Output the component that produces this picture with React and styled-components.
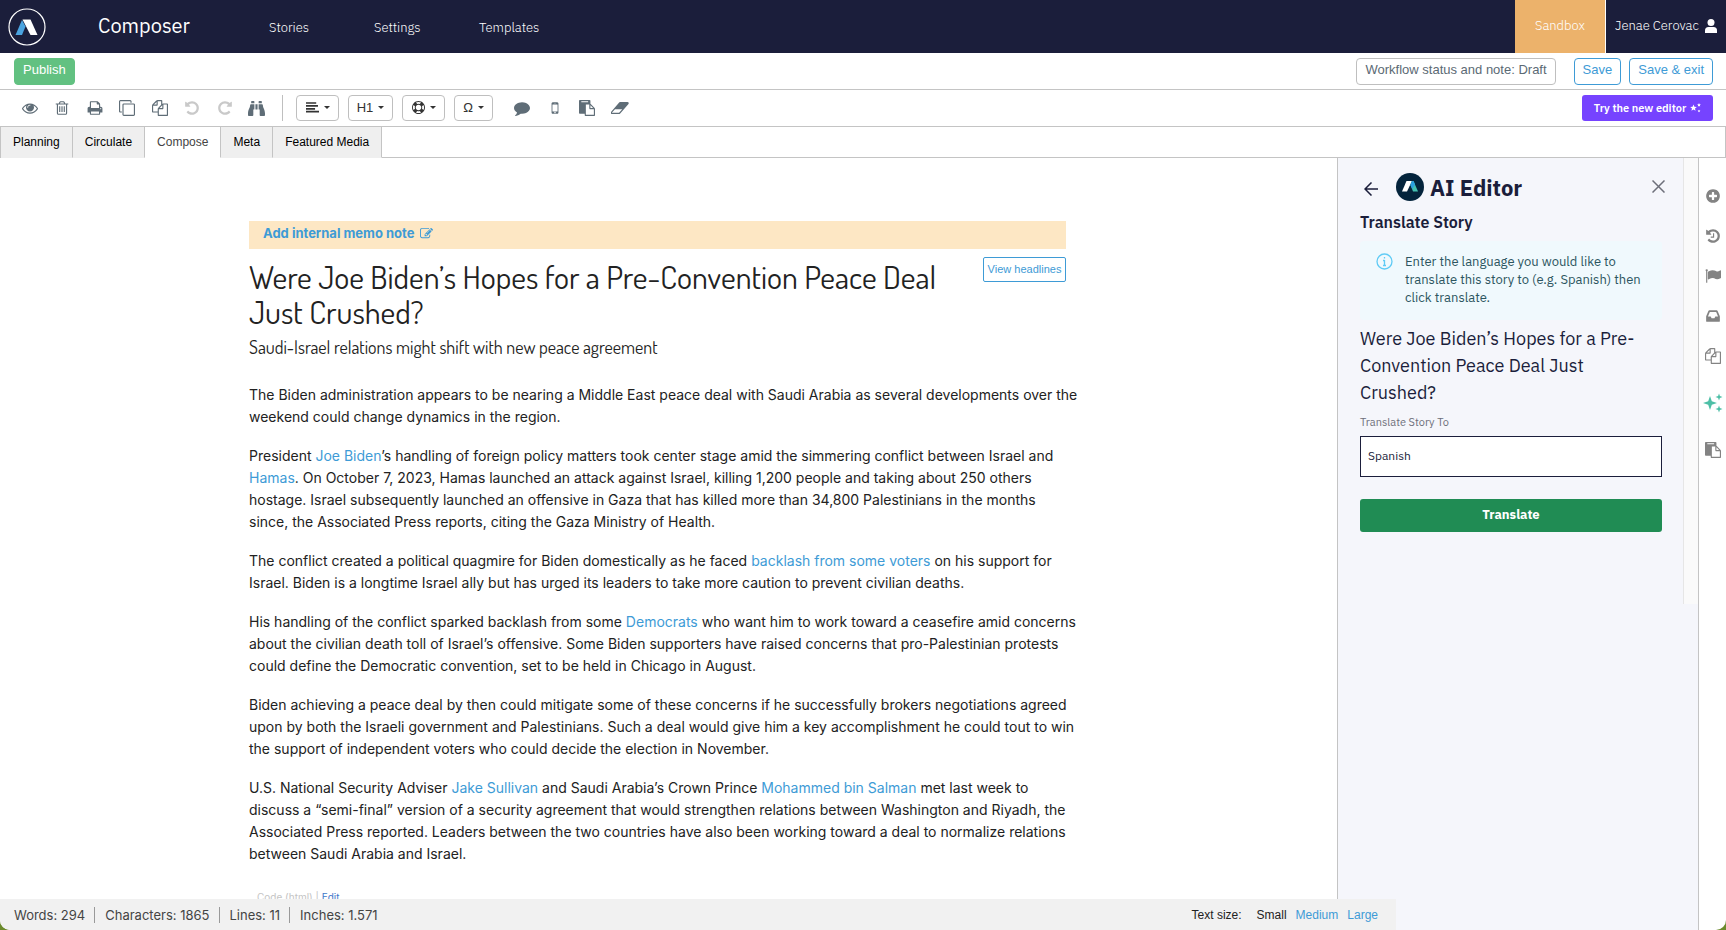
import React from "react";
import styled, { createGlobalStyle, css } from "styled-components";
import { FaBinoculars } from "react-icons/fa";

const ui = '"Liberation Sans", Arial, sans-serif';
const brand = '"IBM Plex Sans", "Noto Sans", "Open Sans", sans-serif';
const story = 'Inter, "Liberation Sans", sans-serif';
const display = 'Dosis, "Liberation Sans Narrow", "Roboto Condensed", Lato, sans-serif';

const GlobalStyle = createGlobalStyle`
  *, *::before, *::after { box-sizing: border-box; }
  html, body, #root { height: 100%; }
  body { margin: 0; background: #6b8a2c; font-family: ${ui}; color: #222; overflow: hidden; }
  button, input { font: inherit; }
  h1, h2, h3, p { margin: 0; font-weight: 400; }
  a { color: #3e9bd6; text-decoration: none; }
`;

/* ---------- icons ---------- */

const undoPath =
  "M1664 896q0 156-61 298t-164 245-245 164-298 61q-172 0-327-72.5t-264-204.5q-7-10-6.5-22.5t8.5-20.5l137-138q10-9 25-9 16 2 23 12 73 95 179 147t225 52q104 0 198.5-40.5t163.5-109.5 109.5-163.5 40.5-198.5-40.5-198.5-109.5-163.5-163.5-109.5-198.5-40.5q-98 0-188 35.5t-160 101.5l137 138q31 30 14 69-17 40-59 40h-448q-26 0-45-19t-19-45v-448q0-42 40-59 39-17 69 14l130 129q107-101 244.5-156.5t284.5-55.5q156 0 298 61t245 164 164 245 61 298z";

const glyphs = {
  eye: "M1664 960q-152-236-381-353 61 104 61 225 0 185-131.5 316.5t-316.5 131.5-316.5-131.5-131.5-316.5q0-121 61-225-229 117-381 353 133 205 333.5 326.5t434.5 121.5 434.5-121.5 333.5-326.5zm-720-384q0-20-14-34t-34-14q-125 0-214.5 89.5t-89.5 214.5q0 20 14 34t34 14 34-14 14-34q0-86 61-147t147-61q20 0 34-14t14-34zm848 384q0 34-20 69-140 230-376.5 368.5t-499.5 138.5-499.5-139-376.5-368q-20-35-20-69t20-69q140-229 376.5-368t499.5-139 499.5 139 376.5 368q20 35 20 69z",
  trash: "M704 736v576q0 14-9 23t-23 9h-64q-14 0-23-9t-9-23v-576q0-14 9-23t23-9h64q14 0 23 9t9 23zm256 0v576q0 14-9 23t-23 9h-64q-14 0-23-9t-9-23v-576q0-14 9-23t23-9h64q14 0 23 9t9 23zm256 0v576q0 14-9 23t-23 9h-64q-14 0-23-9t-9-23v-576q0-14 9-23t23-9h64q14 0 23 9t9 23zm128 724v-948h-896v948q0 22 7 40.5t14.5 27 10.5 8.5h832q3 0 10.5-8.5t14.5-27 7-40.5zm-672-1076h448l-48-117q-7-9-17-11h-317q-10 2-17 11zm928 32v64q0 14-9 23t-23 9h-96v948q0 83-47 143.5t-113 60.5h-832q-66 0-113-58.5t-47-141.5v-952h-96q-14 0-23-9t-9-23v-64q0-14 9-23t23-9h309l70-167q15-37 54-63t79-26h320q40 0 79 26t54 63l70 167h309q14 0 23 9t9 23z",
  print: "M448 1536h896v-256h-896v256zm0-640h896v-384h-160q-40 0-68-28t-28-68v-160h-640v640zm1152 64q0-26-19-45t-45-19-45 19-19 45 19 45 45 19 45-19 19-45zm128 0v416q0 13-9.5 22.5t-22.5 9.5h-224v160q0 40-28 68t-68 28h-960q-40 0-68-28t-28-68v-160h-224q-13 0-22.5-9.5t-9.5-22.5v-416q0-79 56.5-135.5t135.5-56.5h64v-544q0-40 28-68t68-28h672q40 0 88 20t76 48l152 152q28 28 48 76t20 88v256h64q79 0 135.5 56.5t56.5 135.5z",
  clone: "M1664 1632v-1088q0-13-9.5-22.5t-22.5-9.5h-1088q-13 0-22.5 9.5t-9.5 22.5v1088q0 13 9.5 22.5t22.5 9.5h1088q13 0 22.5-9.5t9.5-22.5zm128-1088v1088q0 66-47 113t-113 47h-1088q-66 0-113-47t-47-113v-1088q0-66 47-113t113-47h1088q66 0 113 47t47 113zm-384-384v160h-128v-160q0-13-9.5-22.5t-22.5-9.5h-1088q-13 0-22.5 9.5t-9.5 22.5v1088q0 13 9.5 22.5t22.5 9.5h160v128h-160q-66 0-113-47t-47-113v-1088q0-66 47-113t113-47h1088q66 0 113 47t47 113z",
  copy: "M1696 384q40 0 68 28t28 68v1216q0 40-28 68t-68 28h-960q-40 0-68-28t-28-68v-288h-544q-40 0-68-28t-28-68v-672q0-40 20-88t48-76l408-408q28-28 76-48t88-20h416q40 0 68 28t28 68v328q68-40 128-40h416zm-544 213l-299 299h299v-299zm-640-384l-299 299h299v-299zm196 647l316-316v-416h-384v416q0 40-28 68t-68 28h-416v640h512v-256q0-40 20-88t48-76zm956 804v-1152h-384v416q0 40-28 68t-68 28h-416v640h896z",
  undo: undoPath,
  history: undoPath + "m-640-288v448q0 14-9 23t-23 9h-320q-14 0-23-9t-9-23v-64q0-14 9-23t23-9h224v-352q0-14 9-23t23-9h64q14 0 23 9t9 23z",
  comment: "M1792 896q0 174-120 321.5t-326 233-450 85.5q-70 0-145-8-198 175-460 242-49 14-114 22-17 2-30.5-9t-17.5-29v-1q-3-4-.5-12t2-10 4.5-9.5l6-9 7-8.5 8-9q7-8 31-34.5t34.5-38 31-39.5 32.5-51 27-59 26-76q-157-89-247.5-220t-90.5-281q0-130 71-248.5t191-204.5 286-136.5 348-50.5q244 0 450 85.5t326 233 120 321.5z",
  mobile: "M976 1408q0-33-23.5-56.5t-56.5-23.5-56.5 23.5-23.5 56.5 23.5 56.5 56.5 23.5 56.5-23.5 23.5-56.5zm208-160v-704q0-13-9.5-22.5t-22.5-9.5h-512q-13 0-22.5 9.5t-9.5 22.5v704q0 13 9.5 22.5t22.5 9.5h512q13 0 22.5-9.5t9.5-22.5zm-192-848q0-16-16-16h-160q-16 0-16 16t16 16h160q16 0 16-16zm288-16v1024q0 52-38 90t-90 38h-512q-52 0-90-38t-38-90v-1024q0-52 38-90t90-38h512q52 0 90 38t38 90z",
  paste: "M768 1664h896v-640h-416q-40 0-68-28t-28-68v-416h-384v1152zm256-1440v-64q0-13-9.5-22.5t-22.5-9.5h-704q-13 0-22.5 9.5t-9.5 22.5v64q0 13 9.5 22.5t22.5 9.5h704q13 0 22.5-9.5t9.5-22.5zm256 672h299l-299-299v299zm512 128v672q0 40-28 68t-68 28h-960q-40 0-68-28t-28-68v-160h-544q-40 0-68-28t-28-68v-1344q0-40 28-68t68-28h1088q40 0 68 28t28 68v328q21 13 36 28l408 408q28 28 48 76t20 88z",
  eraser: "M832 1408l336-384h-768l-336 384h768zm1013-1077q15 34 9.5 71.5t-30.5 65.5l-896 1024q-38 44-96 44h-768q-38 0-69.5-20.5t-47.5-54.5q-15-34-9.5-71.5t30.5-65.5l896-1024q38-44 96-44h768q38 0 69.5 20.5t47.5 54.5z",
  ring: "M896 0q182 0 348 71t286 191 191 286 71 348-71 348-191 286-286 191-348 71-348-71-286-191-191-286-71-348 71-348 191-286 286-191 348-71zm0 128q-190 0-361 90l194 194q82-28 167-28t167 28l194-194q-171-90-361-90zm-678 1129l194-194q-28-82-28-167t28-167l-194-194q-90 171-90 361t90 361zm678 407q190 0 361-90l-194-194q-82 28-167 28t-167-28l-194 194q171 90 361 90zm0-384q159 0 271.5-112.5t112.5-271.5-112.5-271.5-271.5-112.5-271.5 112.5-112.5 271.5 112.5 271.5 271.5 112.5zm484-217l194 194q90-171 90-361t-90-361l-194 194q28 82 28 167t-28 167z",
  align: "M0 160h1408v230H0zM0 560h1650v230H0zM0 960h1250v230H0zM0 1360h1792v230H0z",
  edit: "M888 1184l116-116-152-152-116 116v56h96v96h56zm440-720q-16-16-33 1l-350 350q-17 17-1 33t33-1l350-350q17-17 1-33zm80 594v190q0 119-84.5 203.5t-203.5 84.5h-832q-119 0-203.5-84.5t-84.5-203.5v-832q0-119 84.5-203.5t203.5-84.5h832q63 0 117 25 15 7 18 23 3 17-9 29l-49 49q-14 14-32 8-23-6-45-6h-832q-66 0-113 47t-47 113v832q0 66 47 113t113 47h832q66 0 113-47t47-113v-126q0-13 9-22l64-64q15-15 35-7t20 29zm-96-738l288 288-672 672h-288v-288zm444 132l-92 92-288-288 92-92q28-28 68-28t68 28l152 152q28 28 28 68t-28 68z",
  plus: "M1344 960v-128q0-26-19-45t-45-19h-256v-256q0-26-19-45t-45-19h-128q-26 0-45 19t-19 45v256h-256q-26 0-45 19t-19 45v128q0 26 19 45t45 19h256v256q0 26 19 45t45 19h128q26 0 45-19t19-45v-256h256q26 0 45-19t19-45zm320-64q0 209-103 385.5t-279.5 279.5-385.5 103-385.5-103-279.5-279.5-103-385.5 103-385.5 279.5-279.5 385.5-103 385.5 103 279.5 279.5 103 385.5z",
  flag: "M320 256q0 72-64 110v1266q0 13-9.5 22.5t-22.5 9.5h-64q-13 0-22.5-9.5t-9.5-22.5v-1266q-64-38-64-110 0-53 37.5-90.5t90.5-37.5 90.5 37.5 37.5 90.5zm1472 64v763q0 25-12.5 38.5t-39.5 27.5q-215 116-369 116-61 0-123.5-22t-108.5-48-115.5-48-142.5-22q-192 0-464 146-17 9-33 9-26 0-45-19t-19-45v-742q0-32 31-55 21-14 79-43 236-120 421-120 107 0 200 29t219 88q38 19 88 19 54 0 117.5-21t110-47 88-47 54.5-21q26 0 45 19t19 45z",
  inbox: "M1151 960h316q-1-3-2.5-8t-2.5-8l-212-496h-708l-212 496q-1 2-2.5 8t-2.5 8h316l95 192h320zm513 30v482q0 26-19 45t-45 19h-1408q-26 0-45-19t-19-45v-482q0-62 25-123l238-552q10-25 36.5-42t52.5-17h832q26 0 52.5 17t36.5 42l238 552q25 61 25 123z",
};

const Svg = styled.svg`
  display: block;
  flex: none;
  fill: ${(p) => p.$fill || "currentColor"};
  transform: ${(p) => (p.$flip ? "scaleX(-1)" : "none")};
`;

const Glyph = ({ name, size = 16, flip }) => (
  <Svg width={size} height={size} viewBox={name === "eraser" ? "-20 0 1900 1792" : "0 0 1792 1792"} $flip={flip} aria-hidden="true">
    <path d={glyphs[name]} />
  </Svg>
);

const sparkle = (x, y, r) => {
  const k = Math.round(r * 0.25 * 10) / 10;
  return `M${x} ${y - r}L${x + k} ${y - k}L${x + r} ${y}L${x + k} ${y + k}L${x} ${y + r}L${x - k} ${y + k}L${x - r} ${y}L${x - k} ${y - k}Z`;
};

const star = (x, y, r) =>
  "M" +
  Array.from({ length: 10 }, (_, i) => {
    const a = (Math.PI * i) / 5;
    const d = i % 2 ? r * 0.45 : r;
    return `${(x + d * Math.sin(a)).toFixed(2)} ${(y - d * Math.cos(a)).toFixed(2)}`;
  }).join("L") +
  "Z";

const BrandLogo = () => (
  <Svg width="38" height="38" viewBox="0 0 38 38" aria-hidden="true">
    <circle cx="19" cy="19" r="18" fill="none" stroke="#fff" strokeWidth="1.2" />
    <path d="M14 12L17.500 18.500 14 27H7.500z" fill="#4aa3df" />
    <path d="M14.500 11.500h8L29.500 27h-7z" fill="#fff" />
  </Svg>
);

const AiLogo = () => (
  <Svg width="28" height="28" viewBox="0 0 28 28" aria-hidden="true">
    <circle cx="14" cy="14" r="14" fill="#04243c" />
    <path d="M10.500 8H16L11 18.500H6z" fill="#fff" />
    <path d="M16 8h1.500L22 18.500h-5L14.500 12z" fill="#43bfb0" />
    <path d="M16 8L14.300 12l2 4L19 11.500 17.500 8z" fill="#2b9fe0" />
  </Svg>
);

/* ---------- shell ---------- */

const Window = styled.div`
  position: relative;
  display: flex;
  flex-direction: column;
  height: 100vh;
  background: #fff;
  border-radius: 0 0 10px 10px;
  overflow: hidden;
`;

const TopBar = styled.header`
  display: flex;
  align-items: center;
  height: 53px;
  flex: none;
  padding-left: 8px;
  background: #1b1e3b;
  color: #fff;
  font-family: ${brand};
`;

const ProductName = styled.span`
  width: 171px;
  padding: 0 0 2px 52px;
  font-size: 20px;
  line-height: 26px;
`;

const TopNav = styled.nav`
  display: grid;
  grid-template-columns: repeat(3, 105px);
  flex: 1;
  padding-left: 52px;
  a { color: #fff; font-size: 13px; font-weight: 300; line-height: 20px; padding-top: 2px; }
`;

const Environment = styled.div`
  display: flex;
  align-items: center;
  justify-content: center;
  width: 90px;
  height: 100%;
  padding-bottom: 2px;
  background: #ecb26b;
  font-size: 13px;
  font-weight: 300;
`;

const UserButton = styled.button`
  display: flex;
  align-items: center;
  justify-content: space-between;
  width: 121px;
  height: 100%;
  padding: 0 9px 2px;
  border: 0;
  border-left: 1px solid #fff;
  background: none;
  color: #fff;
  font-size: 13px;
  font-weight: 300;
  white-space: nowrap;
`;

const ActionBar = styled.div`
  display: flex;
  align-items: center;
  height: 37px;
  flex: none;
  padding: 0 13px 0 14px;
  border-bottom: 1px solid #c4c4c4;
`;

const Spacer = styled.div`
  flex: 1;
`;

const tones = {
  green: css`background: #62c181; border-color: #62c181; color: #fff;`,
  grey: css`background: #fff; border-color: #bfbfbf; color: #5b6a74;`,
  blue: css`background: #fff; border-color: #3e9bd6; color: #3e9bd6;`,
};

const Action = styled.button`
  height: 27px;
  padding: 0 8px 3px;
  border: 1px solid;
  border-radius: 4px;
  font-size: 13px;
  line-height: 20px;
  margin-left: ${(p) => p.$gap || 0}px;
  ${(p) => tones[p.$tone]}
`;

const ToolBar = styled.div`
  display: flex;
  align-items: center;
  height: 37px;
  flex: none;
  padding: 0 13px 0 14px;
  border-bottom: 1px solid #c4c4c4;
  color: #5f6d77;
`;

const ToolGroup = styled.div`
  display: flex;
  justify-content: space-between;
  width: ${(p) => p.$width}px;
`;

const Tool = styled.button`
  display: grid;
  place-items: center;
  width: 32px;
  height: 28px;
  padding: 0;
  border: 0;
  background: none;
  color: inherit;
  &:disabled { color: #c9c9c9; }
`;

const Divider = styled.span`
  width: 1px;
  height: 26px;
  margin: 0 13px 0 9px;
  background: #bfbfbf;
`;

const MenuGroup = styled.div`
  display: flex;
  gap: 9px;
  margin-right: 13px;
`;

const MenuButton = styled.button`
  display: flex;
  align-items: center;
  justify-content: center;
  gap: 5px;
  width: ${(p) => p.$width}px;
  height: 26px;
  padding: 0 0 2px;
  border: 1px solid #bfbfbf;
  border-radius: 4px;
  background: #fff;
  color: #333;
  font-size: 13px;
  &::after {
    content: "";
    border: 3px solid transparent;
    border-top-color: #333;
    border-bottom: 0;
  }
`;

const NewEditor = styled.button`
  display: flex;
  align-items: center;
  justify-content: center;
  gap: 4px;
  width: 131px;
  height: 26px;
  padding: 0 0 1px;
  border: 0;
  border-radius: 3px;
  background: #7643ff;
  color: #fff;
  font-family: ${brand};
  font-size: 11px;
  font-weight: 600;
`;

const Tabs = styled.nav`
  display: flex;
  height: 31px;
  flex: none;
  border: 1px solid #c4c4c4;
  border-width: 0 1px 0 1px;
`;

const Tab = styled.button`
  padding: 0 12px;
  border: 0;
  border-right: 1px solid #c4c4c4;
  border-bottom: 1px solid ${(p) => (p.$active ? "#fff" : "#efefef")};
  background: ${(p) => (p.$active ? "#fff" : "#efefef")};
  color: ${(p) => (p.$active ? "#444" : "#000")};
  font-size: 12px;
`;

const TabFill = styled.div`
  flex: 1;
  border-bottom: 1px solid #c4c4c4;
`;

const Workspace = styled.div`
  display: flex;
  flex: 1;
  min-height: 0;
`;

/* ---------- article ---------- */

const Canvas = styled.main`
  flex: 1;
  min-width: 0;
  overflow: hidden;
  margin-bottom: 31px;
  padding: 63px 271px 0 249px;
`;

const Memo = styled.a`
  display: flex;
  align-items: center;
  gap: 6px;
  height: 28px;
  padding: 0 14px 4px;
  background: #fde7c4;
  font: 700 13px/20px ${story};
`;

const Heading = styled.div`
  display: flex;
  justify-content: space-between;
  align-items: flex-start;
  padding-top: 8px;
`;

const Headline = styled.h1`
  padding: 2px 0;
  font: 400 32px/35px ${display};
  white-space: nowrap;
`;

const ViewHeadlines = styled.button`
  width: 83px;
  height: 25px;
  padding: 0 0 2px;
  border: 1px solid #3e9bd6;
  border-radius: 2px;
  background: #fff;
  color: #3e9bd6;
  font-size: 11px;
  white-space: nowrap;
`;

const Deck = styled.h2`
  margin-bottom: 21px;
  font: 400 18px/32px ${display};
`;

const Para = styled.p`
  margin-bottom: 17px;
  font: 400 14px/22px ${story};
  white-space: nowrap;
`;

const Embed = styled.div`
  padding: 7px 8px 0;
  color: #c4c4c4;
  font: 400 10px/16px ${story};
  a { color: #3f78c9; }
`;

/* ---------- assistant panel ---------- */

const Panel = styled.aside`
  display: flex;
  align-items: flex-start;
  width: 362px;
  flex: none;
  border: 1px solid #c4c4c4;
  border-width: 0 1px 0 1px;
  background: #f5f6fb;
  color: #1b1e3b;
  font-family: ${brand};
`;

const PanelBody = styled.div`
  flex: 1;
  min-width: 0;
  padding: 14px 21px 0 22px;
`;

const ScrollTrack = styled.div`
  width: 15px;
  height: 446px;
  border-left: 1px solid #e6e6e6;
  background: #fafafa;
`;

const PanelHeader = styled.div`
  display: flex;
  align-items: center;
  height: 30px;
  margin-right: -7px;
`;

const IconButton = styled.button`
  display: grid;
  place-items: center;
  width: 22px;
  height: 22px;
  padding: ${(p) => (p.$low ? "4px 0 0" : "0 0 2px")};
  border: 0;
  background: none;
  color: ${(p) => p.$color};
`;

const PanelTitle = styled.h2`
  flex: 1;
  padding-left: 6px;
  font-size: 22px;
  font-weight: 700;
`;

const LogoSlot = styled.span`
  padding-left: 14px;
`;

const PanelSubtitle = styled.h3`
  margin: 8px 0 7px;
  font-size: 16px;
  line-height: 24px;
  font-weight: 600;
`;

const Info = styled.div`
  display: flex;
  gap: 12px;
  height: 79px;
  padding: 12px 0 0 16px;
  border-radius: 4px;
  background: #f0f9fd;
  color: #2c5560;
  font-size: 13px;
  line-height: 18px;
  white-space: nowrap;
`;

const StoryTitle = styled.p`
  margin: 5px 0 8px;
  font-size: 18px;
  line-height: 27px;
  white-space: nowrap;
`;

const Label = styled.label`
  display: block;
  margin-bottom: 6px;
  color: #6d6f7a;
  font-size: 11px;
  line-height: 16px;
`;

const Field = styled.input`
  display: block;
  width: 100%;
  height: 41px;
  padding: 0 7px 2px;
  border: 1px solid #1b1e3b;
  border-radius: 0;
  background: #fff;
  color: #1b1e3b;
  font-size: 12px;
`;

const Submit = styled.button`
  width: 100%;
  height: 33px;
  margin-top: 22px;
  padding: 0 0 3px;
  border: 0;
  border-radius: 3px;
  background: #208c54;
  color: #fff;
  font-size: 13px;
  font-weight: 700;
`;

const Rail = styled.nav`
  display: flex;
  flex-direction: column;
  align-items: center;
  width: 27px;
  flex: none;
  padding-top: 18px;
  color: #838383;
`;

const RailButton = styled.button`
  display: grid;
  place-items: center;
  width: 27px;
  height: ${(p) => p.$height || 40}px;
  padding: 0;
  border: 0;
  background: none;
  color: ${(p) => p.$color || "inherit"};
`;

/* ---------- status bar ---------- */

const StatusBar = styled.footer`
  position: absolute;
  left: 0;
  right: 330px;
  bottom: 0;
  display: flex;
  align-items: center;
  height: 31px;
  padding: 0 18px 0 14px;
  background: #f1f1f1;
  color: #444;
  font: 400 13px/16px ${story};
`;

const Stat = styled.span`
  padding-right: 9px;
  margin-right: 10px;
  border-right: 1px solid ${(p) => (p.$last ? "transparent" : "#999")};
`;

const SizePicker = styled.div`
  display: flex;
  gap: 9px;
  font-family: ${ui};
  font-size: 12px;
  color: #222;
  span { margin-right: 6px; }
  button { padding: 0; border: 0; background: none; color: #3e9bd6; }
  button[aria-pressed="true"] { color: #222; }
`;

export default function App() {
  return (
    <>
      <GlobalStyle />
      <Window>
        <TopBar>
          <BrandLogo />
          <ProductName>Composer</ProductName>
          <TopNav>
            <a href="#stories">Stories</a>
            <a href="#settings">Settings</a>
            <a href="#templates">Templates</a>
          </TopNav>
          <Environment>Sandbox</Environment>
          <UserButton>
            Jenae Cerovac
            <Svg width="12" height="14" viewBox="0 0 12 14" aria-hidden="true">
              <circle cx="6" cy="3.500" r="3.500" />
              <path d="M0 14v-2.500Q0 8 3.500 8h5Q12 8 12 11.500V14z" />
            </Svg>
          </UserButton>
        </TopBar>

        <ActionBar>
          <Action $tone="green">Publish</Action>
          <Spacer />
          <Action $tone="grey">Workflow status and note: Draft</Action>
          <Action $tone="blue" $gap={18}>Save</Action>
          <Action $tone="blue" $gap={8}>Save &amp; exit</Action>
        </ActionBar>

        <ToolBar>
          <ToolGroup $width={259}>
            <Tool aria-label="Preview"><Glyph name="eye" /></Tool>
            <Tool aria-label="Delete"><Glyph name="trash" /></Tool>
            <Tool aria-label="Print"><Glyph name="print" /></Tool>
            <Tool aria-label="Clone"><Glyph name="clone" /></Tool>
            <Tool aria-label="Copy"><Glyph name="copy" /></Tool>
            <Tool aria-label="Undo" disabled><Glyph name="undo" /></Tool>
            <Tool aria-label="Redo" disabled><Glyph name="undo" flip /></Tool>
            <Tool aria-label="Find"><FaBinoculars size={17} /></Tool>
          </ToolGroup>
          <Divider />
          <MenuGroup>
            <MenuButton $width={43} aria-label="Alignment"><Glyph name="align" size={13} /></MenuButton>
            <MenuButton $width={45}>H1</MenuButton>
            <MenuButton $width={43} aria-label="Widgets"><Glyph name="ring" size={13} /></MenuButton>
            <MenuButton $width={39}>Ω</MenuButton>
          </MenuGroup>
          <ToolGroup $width={130}>
            <Tool aria-label="Comment"><Glyph name="comment" /></Tool>
            <Tool aria-label="Mobile view"><Glyph name="mobile" /></Tool>
            <Tool aria-label="Paste"><Glyph name="paste" /></Tool>
            <Tool aria-label="Clear formatting"><Glyph name="eraser" size={18} /></Tool>
          </ToolGroup>
          <Spacer />
          <NewEditor>
            Try the new editor
            <Svg width="11" height="10" viewBox="0 0 11 10" aria-hidden="true">
              <path d={star(3.5, 5, 3.5) + star(9, 2, 2) + star(9, 8, 1.5)} />
            </Svg>
          </NewEditor>
        </ToolBar>

        <Tabs>
          <Tab>Planning</Tab>
          <Tab>Circulate</Tab>
          <Tab $active>Compose</Tab>
          <Tab>Meta</Tab>
          <Tab>Featured Media</Tab>
          <TabFill />
        </Tabs>

        <Workspace>
          <Canvas>
            <Memo href="#memo">
              Add internal memo note <Glyph name="edit" size={13} />
            </Memo>
            <Heading>
              <Headline>
                Were Joe Biden’s Hopes for a Pre-Convention Peace Deal
                <br />
                Just Crushed?
              </Headline>
              <ViewHeadlines>View headlines</ViewHeadlines>
            </Heading>
            <Deck>Saudi-Israel relations might shift with new peace agreement</Deck>
            <Para>
              The Biden administration appears to be nearing a Middle East peace deal with Saudi Arabia as several developments over the<br />
              weekend could change dynamics in the region.
            </Para>
            <Para>
              President <a href="#biden">Joe Biden</a>’s handling of foreign policy matters took center stage amid the simmering conflict between Israel and<br />
              <a href="#hamas">Hamas</a>. On October 7, 2023, Hamas launched an attack against Israel, killing 1,200 people and taking about 250 others<br />
              hostage. Israel subsequently launched an offensive in Gaza that has killed more than 34,800 Palestinians in the months<br />
              since, the Associated Press reports, citing the Gaza Ministry of Health.
            </Para>
            <Para>
              The conflict created a political quagmire for Biden domestically as he faced <a href="#backlash">backlash from some voters</a> on his support for<br />
              Israel. Biden is a longtime Israel ally but has urged its leaders to take more caution to prevent civilian deaths.
            </Para>
            <Para>
              His handling of the conflict sparked backlash from some <a href="#democrats">Democrats</a> who want him to work toward a ceasefire amid concerns<br />
              about the civilian death toll of Israel’s offensive. Some Biden supporters have raised concerns that pro-Palestinian protests<br />
              could define the Democratic convention, set to be held in Chicago in August.
            </Para>
            <Para>
              Biden achieving a peace deal by then could mitigate some of these concerns if he successfully brokers negotiations agreed<br />
              upon by both the Israeli government and Palestinians. Such a deal would give him a key accomplishment he could tout to win<br />
              the support of independent voters who could decide the election in November.
            </Para>
            <Para>
              U.S. National Security Adviser <a href="#sullivan">Jake Sullivan</a> and Saudi Arabia’s Crown Prince <a href="#mbs">Mohammed bin Salman</a> met last week to<br />
              discuss a “semi-final” version of a security agreement that would strengthen relations between Washington and Riyadh, the<br />
              Associated Press reported. Leaders between the two countries have also been working toward a deal to normalize relations<br />
              between Saudi Arabia and Israel.
            </Para>
            <Embed>
              Code (html) | <a href="#edit">Edit</a>
            </Embed>
          </Canvas>

          <Panel>
            <PanelBody>
              <PanelHeader>
                <IconButton aria-label="Back" $color="#1b1e3b" $low>
                  <Svg width="14" height="14" viewBox="0 0 14 14" $fill="none" stroke="currentColor" strokeWidth="1.500">
                    <path d="M14 7H1M7.500 .5L1 7l6.500 6.500" />
                  </Svg>
                </IconButton>
                <LogoSlot><AiLogo /></LogoSlot>
                <PanelTitle>AI Editor</PanelTitle>
                <IconButton aria-label="Close" $color="#6d6f7a">
                  <Svg width="13" height="13" viewBox="0 0 13 13" $fill="none" stroke="currentColor" strokeWidth="1.500">
                    <path d="M.5 .5l12 12M12.500 .5L.5 12.500" />
                  </Svg>
                </IconButton>
              </PanelHeader>
              <PanelSubtitle>Translate Story</PanelSubtitle>
              <Info>
                <Svg width="17" height="17" viewBox="0 0 17 17" $fill="none" stroke="#5fcbf5" strokeWidth="1.300" aria-hidden="true">
                  <circle cx="8.500" cy="8.500" r="7.500" />
                  <path d="M8.500 4v1.500M8.500 7v6M7 7.500h1.500M7 12.500h3" />
                </Svg>
                <p>
                  Enter the language you would like to<br />
                  translate this story to (e.g. Spanish) then<br />
                  click translate.
                </p>
              </Info>
              <StoryTitle>
                Were Joe Biden’s Hopes for a Pre-<br />
                Convention Peace Deal Just<br />
                Crushed?
              </StoryTitle>
              <Label htmlFor="language">Translate Story To</Label>
              <Field id="language" defaultValue="Spanish" />
              <Submit>Translate</Submit>
            </PanelBody>
            <ScrollTrack />
          </Panel>

          <Rail>
            <RailButton aria-label="Add"><Glyph name="plus" /></RailButton>
            <RailButton aria-label="History"><Glyph name="history" /></RailButton>
            <RailButton aria-label="Flag"><Glyph name="flag" /></RailButton>
            <RailButton aria-label="Inbox"><Glyph name="inbox" /></RailButton>
            <RailButton aria-label="Copies"><Glyph name="copy" /></RailButton>
            <RailButton aria-label="AI tools" $color="#4dbfa6" $height={54}>
              <Svg width="20" height="20" viewBox="0 0 20 20" aria-hidden="true">
                <path d={sparkle(7, 10, 7) + sparkle(16, 4, 3.5) + sparkle(16, 16, 3.5)} />
              </Svg>
            </RailButton>
            <RailButton aria-label="Paste"><Glyph name="paste" /></RailButton>
          </Rail>
        </Workspace>

        <StatusBar>
          <Stat>Words: 294</Stat>
          <Stat>Characters: 1865</Stat>
          <Stat>Lines: 11</Stat>
          <Stat $last>Inches: 1.571</Stat>
          <Spacer />
          <SizePicker>
            <span>Text size:</span>
            <button aria-pressed="true">Small</button>
            <button>Medium</button>
            <button>Large</button>
          </SizePicker>
        </StatusBar>
      </Window>
    </>
  );
}
